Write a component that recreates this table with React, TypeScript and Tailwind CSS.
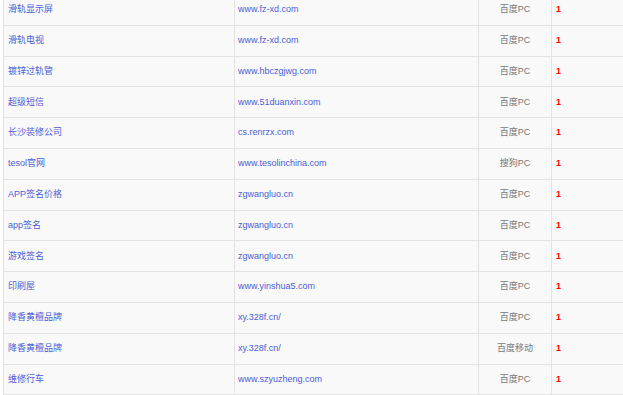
import React from 'react';

interface Row {
    keyword: string;
    site: string;
    engine: string;
    rank: number;
}

const rows: Row[] = [
    { keyword: '滑轨显示屏', site: 'www.fz-xd.com', engine: '百度PC', rank: 1 },
    { keyword: '滑轨电视', site: 'www.fz-xd.com', engine: '百度PC', rank: 1 },
    { keyword: '镀锌过轨管', site: 'www.hbczgjwg.com', engine: '百度PC', rank: 1 },
    { keyword: '超级短信', site: 'www.51duanxin.com', engine: '百度PC', rank: 1 },
    { keyword: '长沙装修公司', site: 'cs.renrzx.com', engine: '百度PC', rank: 1 },
    { keyword: 'tesol官网', site: 'www.tesolinchina.com', engine: '搜狗PC', rank: 1 },
    { keyword: 'APP签名价格', site: 'zgwangluo.cn', engine: '百度PC', rank: 1 },
    { keyword: 'app签名', site: 'zgwangluo.cn', engine: '百度PC', rank: 1 },
    { keyword: '游戏签名', site: 'zgwangluo.cn', engine: '百度PC', rank: 1 },
    { keyword: '印刷屋', site: 'www.yinshua5.com', engine: '百度PC', rank: 1 },
    { keyword: '降香黄檀品牌', site: 'xy.328f.cn/', engine: '百度PC', rank: 1 },
    { keyword: '降香黄檀品牌', site: 'xy.328f.cn/', engine: '百度移动', rank: 1 },
    { keyword: '维修行车', site: 'www.szyuzheng.com', engine: '百度PC', rank: 1 },
];

export default function App() {
    return (
        <div className="w-[623px] h-[395px] overflow-hidden bg-white font-['Liberation_Sans','Noto_Sans_CJK_SC',sans-serif] text-[9px]">
            <div className="ml-[3px] -mt-[5px] border-l border-[#e3e3e3] bg-[#f9f9f9]">
                {rows.map((row, i) => (
                    <div
                        key={i}
                        className="grid grid-cols-[231px_244px_73px_1fr] h-[30.8px] border-b border-[#e3e3e3]"
                    >
                        <div className="flex items-center pl-[4px] border-r border-[#e3e3e3] text-[#4a5ed6]">
                            {row.keyword}
                        </div>
                        <div className="flex items-center pl-[3px] border-r border-[#e3e3e3] text-[#4a5ed6]">
                            {row.site}
                        </div>
                        <div className="flex items-center justify-center border-r border-[#e3e3e3] text-[#777]">
                            {row.engine}
                        </div>
                        <div className="flex items-center pl-[4px] font-bold text-[#f00]">
                            {row.rank}
                        </div>
                    </div>
                ))}
            </div>
        </div>
    );
}
